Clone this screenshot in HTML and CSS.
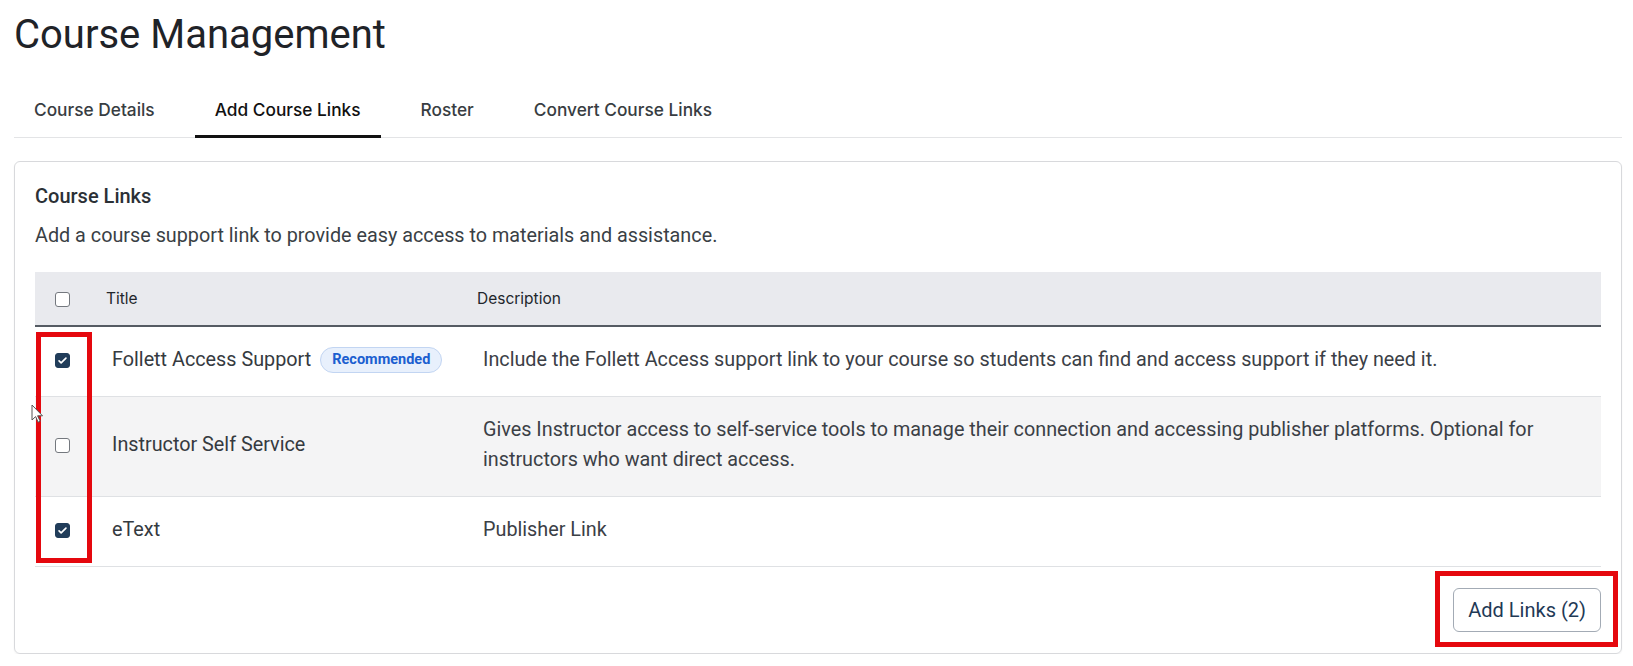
FILE: index.html
```html
<!DOCTYPE html>
<html lang="en">
<head>
    <meta charset="UTF-8">
    <title>Course Management</title>
    <link rel="stylesheet" href="styles.css">
</head>
<body>
    <div class="page">
        <h1 class="page-title">Course Management</h1>

        <nav class="tabs">
            <a class="tab">Course Details</a>
            <a class="tab active">Add Course Links</a>
            <a class="tab">Roster</a>
            <a class="tab">Convert Course Links</a>
        </nav>

        <section class="card">
            <h2 class="card-title">Course Links</h2>
            <p class="card-text">Add a course support link to provide easy access to materials and assistance.</p>

            <table class="links-table">
                <thead>
                    <tr>
                        <th class="col-check"><span class="checkbox"></span></th>
                        <th class="col-title">Title</th>
                        <th>Description</th>
                    </tr>
                </thead>
                <tbody>
                    <tr>
                        <td class="col-check">
                            <span class="checkbox checked">
                                <svg viewBox="0 0 16 16" width="11" height="11"><path d="M3 8.5l3 3 7-7" fill="none" stroke="#fff" stroke-width="2.4" stroke-linecap="round" stroke-linejoin="round"/></svg>
                            </span>
                        </td>
                        <td class="col-title">Follett Access Support<span class="badge">Recommended</span></td>
                        <td>Include the Follett Access support link to your course so students can find and access support if they need it.</td>
                    </tr>
                    <tr class="striped">
                        <td class="col-check"><span class="checkbox"></span></td>
                        <td class="col-title">Instructor Self Service</td>
                        <td>Gives Instructor access to self-service tools to manage their connection and accessing publisher platforms. Optional for instructors who want direct access.</td>
                    </tr>
                    <tr>
                        <td class="col-check">
                            <span class="checkbox checked">
                                <svg viewBox="0 0 16 16" width="11" height="11"><path d="M3 8.5l3 3 7-7" fill="none" stroke="#fff" stroke-width="2.4" stroke-linecap="round" stroke-linejoin="round"/></svg>
                            </span>
                        </td>
                        <td class="col-title">eText</td>
                        <td>Publisher Link</td>
                    </tr>
                </tbody>
            </table>

            <div class="card-actions">
                <button class="btn-outline">Add Links (2)</button>
            </div>
        </section>
    </div>

    <!-- review annotations -->
    <div class="mark mark-checks"></div>
    <div class="mark mark-button"></div>

    <svg class="cursor" width="12" height="19" viewBox="0 0 12 19">
        <path d="M1 1v15l3.6-3.4 2.6 5.6 2-1-2.6-5.4H11.5z" fill="#fff" stroke="#555" stroke-width="1"/>
    </svg>
</body>
</html>
```

FILE: styles.css
```css
* {
    margin: 0;
    padding: 0;
    box-sizing: border-box;
}

body {
    position: relative;
    font-family: Roboto, "Liberation Sans", sans-serif;
    color: #333a40;
    background: #fff;
}

.page {
    padding: 11px 11px 0 14px;
}

.page-title {
    font-size: 40px;
    font-weight: 400;
    line-height: 47px;
    color: #1f2328;
}

.tabs {
    display: flex;
    gap: 20px;
    margin-top: 24px;
    border-bottom: 1px solid #e3e4e6;
}

.tab {
    font-family: Inter, "Liberation Sans", sans-serif;
    font-size: 17.3px;
    font-weight: 500;
    line-height: 21px;
    color: #383d42;
    padding: 17px 20px 15px;
    margin-bottom: -1px;
    border-bottom: 3px solid transparent;
    cursor: pointer;
}

.tab.active {
    color: #111;
    border-bottom-color: #111;
}

.card {
    margin-top: 23px;
    border: 1px solid #d8d9dc;
    border-radius: 6px;
    padding: 20px 20px 21px;
    box-shadow: 0 1px 2px rgba(0, 0, 0, 0.06);
}

.card-title {
    font-size: 20px;
    font-weight: 500;
    line-height: 28px;
    color: #2b3036;
}

.card-text {
    margin-top: 12px;
    font-size: 19.8px;
    line-height: 28px;
    color: #3a3f45;
}

.links-table {
    width: 100%;
    margin-top: 22px;
    border-collapse: collapse;
    table-layout: fixed;
}

.links-table th {
    font-family: Inter, "Liberation Sans", sans-serif;
    font-size: 15.5px;
    font-weight: 400;
    text-align: left;
    color: #22262b;
    background: #e9eaee;
    height: 54px;
    padding: 0 14px;
    border-bottom: 2px solid #555b63;
    vertical-align: middle;
}

.links-table td {
    font-size: 19.8px;
    line-height: 30px;
    color: #3b4046;
    padding: 18px 20px 21px;
    border-bottom: 1px solid #dfe1e4;
    vertical-align: middle;
}

.links-table .col-check {
    width: 57px;
    padding-left: 20px;
    padding-right: 0;
}

.links-table th.col-check {
    padding-top: 2px;
}

.links-table .col-title {
    width: 371px;
}

.links-table td.col-title {
    color: #353a40;
    white-space: nowrap;
}

.links-table tr.striped td {
    background: #f4f4f5;
}

.checkbox {
    display: flex;
    align-items: center;
    justify-content: center;
    width: 15px;
    height: 15px;
    border: 1.5px solid #74787e;
    border-radius: 3px;
    background: #fff;
}

.checkbox.checked {
    background: #213d5a;
    border-color: #213d5a;
}

.badge {
    display: inline-block;
    margin-left: 9px;
    padding: 3px 11px;
    font-size: 14.5px;
    font-weight: 700;
    line-height: 18px;
    color: #1c5fd0;
    background: #e8f0fc;
    border: 1px solid #c2d5f2;
    border-radius: 14px;
    vertical-align: 2px;
}

.card-actions {
    display: flex;
    justify-content: flex-end;
    margin-top: 21px;
}

.btn-outline {
    font-family: Roboto, "Liberation Sans", sans-serif;
    font-size: 20px;
    line-height: 24px;
    color: #1f3a56;
    background: #fff;
    border: 1px solid #a3abb5;
    border-radius: 6px;
    padding: 9px 14px;
    cursor: pointer;
}

.mark {
    position: absolute;
    border: 5px solid #e5080e;
    pointer-events: none;
}

.mark-checks {
    left: 36px;
    top: 332px;
    width: 56px;
    height: 231px;
}

.mark-button {
    left: 1435px;
    top: 571px;
    width: 183px;
    height: 76px;
}

.cursor {
    position: absolute;
    left: 31px;
    top: 404px;
}
```
